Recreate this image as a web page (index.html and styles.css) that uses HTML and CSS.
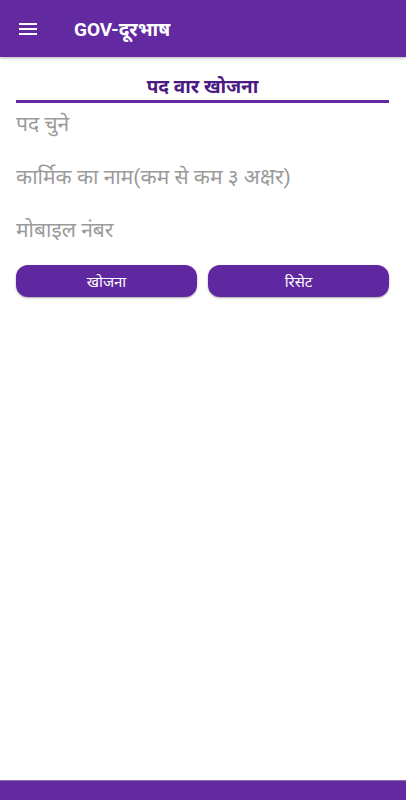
FILE: index.html
```html
<!DOCTYPE html>
<html lang="hi">
<head>
  <meta charset="UTF-8">
  <meta name="viewport" content="width=device-width, initial-scale=1">
  <title>GOV-दूरभाष</title>
  <link rel="stylesheet" href="styles.css">
</head>
<body>

<div class="app">
  <header class="toolbar">
    <svg class="menu-icon" width="24" height="24" viewBox="0 0 24 24">
      <path d="M3 18h18v-2H3v2zm0-5h18v-2H3v2zm0-7v2h18V6H3z" fill="#fff"/>
    </svg>
    <span class="toolbar-title">GOV-दूरभाष</span>
  </header>

  <main class="content">
    <div class="section-title">पद वार खोजना</div>

    <div class="field">पद चुने</div>
    <div class="field">कार्मिक का नाम(कम से कम ३ अक्षर)</div>
    <div class="field">मोबाइल नंबर</div>

    <div class="actions">
      <button class="btn">खोजना</button>
      <button class="btn">रिसेट</button>
    </div>
  </main>

  <footer class="bottom-bar"></footer>
</div>

</body>
</html>
```

FILE: styles.css
```css
body {
  margin: 0;
  font-family: Roboto, "Noto Sans", "Noto Sans Devanagari", sans-serif;
  background: #fff;
}
.app {
  height: 800px;
  display: flex;
  flex-direction: column;
}
.toolbar {
  height: 57px;
  background: #6229a1;
  display: flex;
  align-items: center;
  padding: 0 16px;
  box-shadow: 0 1px 3px rgba(0,0,0,0.3);
}
.menu-icon {
  margin-top: 1px;
}
.toolbar-title {
  margin-left: 34px;
  color: #fff;
  font-size: 19px;
  font-weight: bold;
}
.content {
  flex: 1;
  padding: 17px 17px 0 16px;
}
.section-title {
  text-align: center;
  color: #4b1a82;
  font-size: 19px;
  font-weight: bold;
  line-height: 26px;
  border-bottom: 3px solid #6229a1;
}
.field {
  color: #9b9b9b;
  font-size: 21px;
  line-height: 26px;
  height: 53px;
  padding-top: 8px;
  box-sizing: border-box;
}
.actions {
  display: grid;
  grid-template-columns: 1fr 1fr;
  gap: 11px;
  margin-top: 3px;
}
.btn {
  height: 32px;
  background: #6028a0;
  color: #fff;
  border: none;
  border-radius: 12px;
  font-family: inherit;
  font-size: 15px;
  box-shadow: 0 1px 2px rgba(0,0,0,0.35);
}
.bottom-bar {
  height: 19px;
  background: #6229a1;
  border-top: 1px solid #8f6cb5;
}
```
